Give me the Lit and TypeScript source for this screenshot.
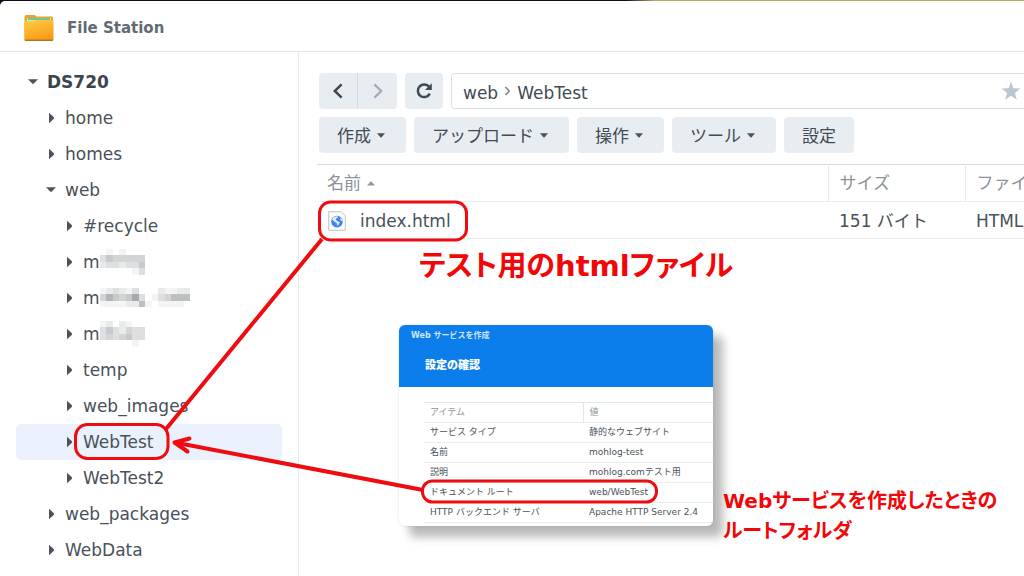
import { LitElement, html, css, svg, nothing } from "lit";
import { customElement, state } from "lit/decorators.js";
import { classMap } from "lit/directives/class-map.js";

interface TreeNode {
  label: string;
  level: number;
  open?: boolean;
  masked?: string[];
}

/* Masked folder names: each string is a row of mosaic cells, 0 = clear, 9 = darkest. */
const TREE: TreeNode[] = [
  { label: "DS720", level: 0, open: true },
  { label: "home", level: 1 },
  { label: "homes", level: 1 },
  { label: "web", level: 1, open: true },
  { label: "#recycle", level: 2 },
  { label: "m", level: 2, masked: ["0101000", "3544444", "2332335", "0000013"] },
  { label: "m", level: 2, masked: ["12321300021122", "47545830134666", "11112261011110"] },
  { label: "m", level: 2, masked: ["1202100", "3532433", "3434533", "0000010"] },
  { label: "temp", level: 2 },
  { label: "web_images", level: 2 },
  { label: "WebTest", level: 2 },
  { label: "WebTest2", level: 2 },
  { label: "web_packages", level: 1 },
  { label: "WebData", level: 1 },
];

const ACTIONS = [
  { label: "作成", menu: true },
  { label: "アップロード", menu: true },
  { label: "操作", menu: true },
  { label: "ツール", menu: true },
  { label: "設定", menu: false },
];

const SUMMARY = [
  ["サービス タイプ", "静的なウェブサイト"],
  ["名前", "mohlog-test"],
  ["説明", "mohlog.comテスト用"],
  ["ドキュメント ルート", "web/WebTest"],
  ["HTTP バックエンド サーバ", "Apache HTTP Server 2.4"],
];

@customElement("folder-tree")
class FolderTree extends LitElement {
  @state() selected = "WebTest";

  static styles = css`
    :host { display: block; padding: 12px 16px; }
    ul { list-style: none; margin: 0; padding: 0; }
    .row {
      display: flex; align-items: center; gap: 9px;
      width: 100%; height: 36px; padding: 0 12px;
      border: 0; border-radius: 5px; background: none;
      font: inherit; color: inherit; text-align: left; white-space: nowrap;
    }
    .level-1 { padding-left: 30px; }
    .level-2 { padding-left: 48px; }
    .level-0 { font-weight: bold; color: #3c454e; }
    .selected { background: #eaf1fc; }
    .arrow { width: 10px; height: 12px; flex: none; fill: #4b545d; }
    .name { display: flex; align-items: center; }
    .mask { display: block; fill: #6d7075; }
  `;

  mosaic(rows: string[]) {
    const cell = 6.45;
    return html`<svg class="mask" width=${rows[0].length * cell} height=${rows.length * cell} shape-rendering="crispEdges" aria-hidden="true">
      ${rows.map((r, y) => [...r].map((v, x) => v === "0" ? nothing : svg`
        <rect x=${x * cell} y=${y * cell} width=${cell} height=${cell} opacity=${Number(v) * 0.075}></rect>`))}
    </svg>`;
  }

  render() {
    return html`<ul>${TREE.map((n) => html`<li>
      <button class=${classMap({ row: true, ["level-" + n.level]: true, selected: n.label === this.selected })}
        @click=${() => (this.selected = n.label)}>
        <svg class="arrow" viewBox="0 0 10 12" aria-hidden="true">
          ${n.open ? svg`<path d="M0 3.2H10L5.8 7.6Q5 8.3 4.2 7.6Z"></path>` : svg`<path d="M3 .7L7.9 5.3Q8.4 6 7.9 6.7L3 11.3Z"></path>`}
        </svg>
        <span class="name">${n.label}${n.masked ? this.mosaic(n.masked) : nothing}</span>
      </button></li>`)}</ul>`;
  }
}

@customElement("file-pane")
class FilePane extends LitElement {
  static styles = css`
    :host { display: block; padding: 21px 0 0 18px; overflow: hidden; }
    .bar { display: flex; gap: 8px; padding-left: 2px; margin-bottom: 8px; }
    button { font: inherit; color: #414b55; border: 0; background: #e8edf2; padding: 0; }
    .bar button { height: 36px; border-radius: 4px; display: flex; align-items: center; justify-content: center; flex: none; }
    .pair { display: flex; }
    .pair button { width: 39px; }
    .pair .back { border-radius: 4px 0 0 4px; border-right: 1px solid #d3dae1; }
    .pair .next { border-radius: 0 4px 4px 0; }
    .bar .reload { width: 38px; }
    .path {
      flex: 1; min-width: 0; box-sizing: border-box; height: 36px; padding: 0 3px 0 11px;
      display: flex; align-items: center; gap: 6px;
      border: 1px solid #dae0e5; border-right: 0; border-radius: 4px 0 0 4px;
    }
    .path a { color: #414b55; text-decoration: none; padding-top: 3px; }
    .path button { margin-left: auto; background: none; }
    .actions button { padding: 1px 18px 0; gap: 6px; }
    .actions .menu { padding-right: 21px; }
    table { width: 100%; table-layout: fixed; border-collapse: collapse; margin-top: 11px; }
    th, td { height: 37px; box-sizing: border-box; padding: 0 11px; text-align: left; font-weight: normal; white-space: nowrap; overflow: hidden; }
    td { padding-top: 2px; }
    thead tr { border-top: 1px solid #d5dce0; }
    tr { border-bottom: 1px solid #e9eef0; }
    th { color: #8b9299; }
    th:first-child { padding-left: 10px; }
    th + th { border-left: 1px solid #e4eaee; }
    .size { width: 137px; }
    .type { width: 59px; }
    .file { display: flex; align-items: center; gap: 14px; }
    .sort { display: flex; align-items: center; gap: 6px; }
    svg { display: block; flex: none; }
  `;

  render() {
    return html`
      <div class="bar">
        <div class="pair">
          <button class="back" aria-label="戻る"><svg width="12" height="16" viewBox="0 0 12 16"><path d="M9.6 1.4L2.8 8L9.6 14.6" fill="none" stroke="#3f4851" stroke-width="2.5"></path></svg></button>
          <button class="next" aria-label="進む"><svg width="12" height="16" viewBox="0 0 12 16"><path d="M2.4 1.4L9.2 8L2.4 14.6" fill="none" stroke="#a5abb1" stroke-width="2.2"></path></svg></button>
        </div>
        <button class="reload" aria-label="更新"><svg width="18" height="18" viewBox="0 0 18 18"><path d="M14.2 5A6.3 6.3 0 1 0 14.8 11.6" fill="none" stroke="#414a53" stroke-width="2.5"></path><path d="M16.8 1.2V8H10Z" fill="#414a53"></path></svg></button>
        <nav class="path" aria-label="パス">
          <a href="#web">web</a>
          <svg width="7" height="10" viewBox="0 0 7 10"><path d="M1.5 1L5.2 5L1.5 9" fill="none" stroke="#7a838b" stroke-width="1.5"></path></svg>
          <a href="#web/WebTest">WebTest</a>
          <button aria-label="お気に入り"><svg width="20" height="20" viewBox="0 0 20 20"><path fill="#bac6d1" d="M10 .7L12.4 7.2L19.4 7.5L13.9 11.9L15.8 18.7L10 14.8L4.2 18.7L6.1 11.9L.6 7.5L7.6 7.2Z"></path></svg></button>
        </nav>
      </div>
      <div class="bar actions">
        ${ACTIONS.map((a) => html`<button class=${classMap({ menu: a.menu })}>${a.label}${a.menu
          ? html`<svg width="8" height="5" viewBox="0 0 8 5" aria-hidden="true"><path fill="#4b545d" d="M0 .3H8L4.6 4.3Q4 4.9 3.4 4.3Z"></path></svg>` : nothing}</button>`)}
      </div>
      <table>
        <thead><tr>
          <th><span class="sort">名前<svg width="8" height="5" viewBox="0 0 8 5" aria-hidden="true"><path fill="#92999f" d="M0 4.6H8L4.6 .7Q4 .1 3.4 .7Z"></path></svg></span></th>
          <th class="size">サイズ</th><th class="type">ファイ</th>
        </tr></thead>
        <tbody><tr>
          <td><span class="file">
            <svg width="18" height="20" viewBox="0 0 18 20" aria-hidden="true">
              <path d="M.7.7H13.2L17.3 4.8V19.3H.7Z" fill="#fbfcfd" stroke="#c1c6ca"></path>
              <circle cx="9" cy="10.6" r="5.8" fill="#3f83ec"></circle>
              <path d="M4 8.3Q6 4.800 9.400 5.200L10.200 6.200L8.200 7.400L8 9L9.800 10.200L11.800 11.200L10.800 13.200L9.600 15L8.800 12.200L6.200 10.400ZM12.200 6.600L14.200 8.600L14.600 10.600L12.600 9.400Z" fill="#e4effc"></path>
            </svg>index.html</span></td>
          <td>151 バイト</td><td>HTML</td>
        </tr></tbody>
      </table>`;
  }
}

@customElement("service-card")
class ServiceCard extends LitElement {
  static styles = css`
    :host {
      display: block; width: 314px; overflow: hidden; border-radius: 6px; background: #fff;
      box-shadow: 10px 11px 10px rgba(0, 0, 0, 0.28), 0 0 3px rgba(0, 0, 0, 0.12);
      font-size: 9px; line-height: 12px; color: #4a525a;
    }
    header { background: #0b7eeb; color: #fff; height: 62px; box-sizing: border-box; padding: 5px 12px; }
    .title { font-size: 8px; font-weight: bold; color: #cfe5fc; }
    h2 { margin: 15px 0 0 14px; font-size: 11px; line-height: 18px; font-weight: 900; }
    .body { padding: 15px 0 3px 25px; }
    table { width: 100%; table-layout: fixed; border-collapse: collapse; border-top: 1px solid #e2e7ea; }
    th, td { height: 20px; box-sizing: border-box; padding: 0 6px 1px; text-align: left; font-weight: normal; white-space: nowrap; }
    tr { border-bottom: 1px solid #e9edf0; }
    thead th { color: #8d949a; }
    thead th + th { border-left: 1px solid #e2e7ea; }
    .item { width: 159px; }
  `;

  render() {
    return html`
      <header><div class="title">Web サービスを作成</div><h2>設定の確認</h2></header>
      <div class="body"><table>
        <thead><tr><th class="item">アイテム</th><th>値</th></tr></thead>
        <tbody>${SUMMARY.map(([k, v]) => html`<tr><td>${k}</td><td>${v}</td></tr>`)}</tbody>
      </table></div>`;
  }
}

@customElement("app-root")
class AppRoot extends LitElement {
  static styles = css`
    :host {
      display: grid; grid-template-rows: 52px 1fr; position: relative;
      min-height: 100vh; box-sizing: border-box; overflow: hidden; background: #fff; color: #48515a;
      font: 17px/24px "DejaVu Sans", "Noto Sans CJK JP", sans-serif;
    }
    .top { background: linear-gradient(90deg, #0d0c1c 0 61%, #bfa968 64% 100%); padding-top: 1px; }
    .titlebar {
      display: flex; align-items: center; gap: 13px; height: 51px; box-sizing: border-box;
      padding: 3px 24px 0; border-bottom: 1px solid #e3e7ea; border-top-left-radius: 5px; background: #fff;
    }
    h1 { margin: 0; font-size: 15px; font-weight: bold; color: #626b73; }
    .content { display: grid; grid-template-columns: 299px 1fr; }
    .side { border-right: 1px solid #e6eaed; }
    main { min-width: 0; }
    .marks { position: absolute; left: 0; top: 0; pointer-events: none; }
    service-card { position: absolute; left: 399px; top: 325px; }
    .note {
      position: absolute; margin: 0; color: #f20608; font-weight: bold; white-space: nowrap;
      font-feature-settings: "palt";
    }
    .file-note { left: 419px; top: 246px; font-size: 29px; line-height: 40px; }
    .root-note { left: 723px; top: 486px; font-size: 20px; line-height: 30px; }
  `;

  render() {
    return html`
      <div class="top"><div class="titlebar">
        <svg width="30" height="28" viewBox="0 0 30 28" aria-hidden="true">
          <defs><linearGradient id="f" x1="0" y1="0" x2=".4" y2="1"><stop offset="0" stop-color="#ffce45"></stop><stop offset="1" stop-color="#fb9b18"></stop></linearGradient></defs>
          <path d="M.5 3Q.5 1 2 1H10.5L12.5 2.5H28Q29 2.5 29 4V12H.5Z" fill="#e5a62b"></path>
          <rect x="3" y="4" width="24" height="4" fill="#d7e9b9"></rect><rect x="4" y="4.2" width="22" height="1.6" fill="#55bd9e"></rect>
          <path d="M0 7H10L12 6H29.5V25Q29.5 27 28 27H2Q.3 27 .3 25Z" fill="url(#f)"></path>
          <path d="M.5 25.5H29.3Q29 27 28 27H2Q.8 27 .5 25.5Z" fill="#ad7422"></path>
        </svg>
        <h1>File Station</h1>
      </div></div>
      <div class="content">
        <aside class="side"><folder-tree></folder-tree></aside>
        <main><file-pane></file-pane></main>
      </div>
      <service-card></service-card>
      <p class="note file-note">テスト用のhtmlファイル</p>
      <p class="note root-note">Webサービスを作成したときの<br>ルートフォルダ</p>
      <svg class="marks" width="700" height="520" fill="none" stroke="#ee0c10" stroke-width="3" aria-hidden="true">
        <rect x="319.5" y="202" width="147" height="38" rx="11"></rect>
        <rect x="75.5" y="424.5" width="92.5" height="34" rx="12"></rect>
        <rect x="422.5" y="481" width="234" height="21" rx="10"></rect>
        <path d="M322 239L166 429" stroke-width="4"></path>
        <path d="M423 490L175 442.5" stroke-width="4"></path>
        <path d="M189.5 438.5L174.5 442.5L187.5 451.5" stroke-width="4" stroke-linecap="round" stroke-linejoin="round"></path>
      </svg>`;
  }
}
